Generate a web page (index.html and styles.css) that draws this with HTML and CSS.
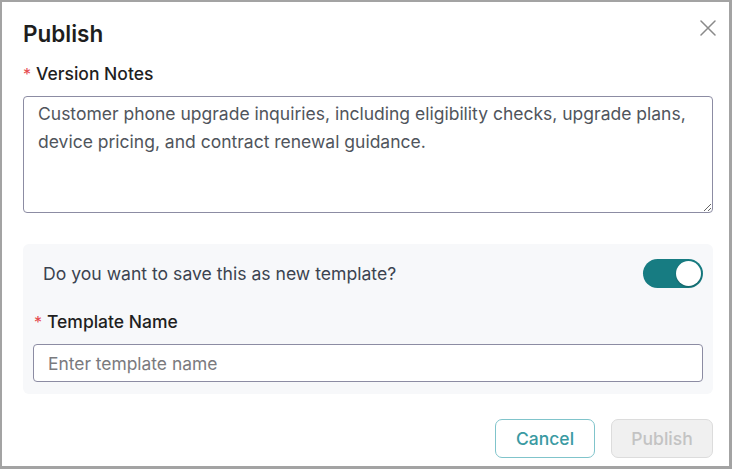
FILE: index.html
```html
<!DOCTYPE html>
<html lang="en">
<head>
<meta charset="utf-8">
<title>Publish</title>
<link rel="stylesheet" href="styles.css">
</head>
<body>
<div class="dialog">
  <div class="header">
    <h1 class="title">Publish</h1>
    <button class="close" aria-label="Close">
      <svg width="16" height="16" viewBox="0 0 16 16"><path d="M1 1L15 15M15 1L1 15" stroke="#8a8a8a" stroke-width="1.5" fill="none" stroke-linecap="round"/></svg>
    </button>
  </div>
  <label class="label"><span class="req">*</span>Version Notes</label>
  <textarea class="notes">Customer phone upgrade inquiries, including eligibility checks, upgrade plans, device pricing, and contract renewal guidance.</textarea>
  <div class="panel">
    <div class="question-row">
      <span class="question">Do you want to save this as new template?</span>
      <span class="toggle"><span class="knob"></span></span>
    </div>
    <label class="label label-tpl"><span class="req">*</span>Template Name</label>
    <input class="input" type="text" placeholder="Enter template name">
  </div>
  <div class="actions">
    <button class="btn btn-cancel">Cancel</button>
    <button class="btn btn-publish">Publish</button>
  </div>
</div>
</body>
</html>
```
FILE: styles.css
```css
* { box-sizing: border-box; }
html, body { margin: 0; padding: 0; background: #fff; }
body { font-family: Inter, "Noto Sans", sans-serif; }

.dialog {
  width: 732px;
  height: 469px;
  border-style: solid;
  border-color: #a3a3a3;
  border-width: 2px 3px 3px 2px;
  padding: 17px 16px 0 21px;
  background: #fff;
}

.header {
  display: flex;
  justify-content: space-between;
  align-items: flex-start;
  height: 30px;
}
.title {
  margin: 0;
  font-size: 22.5px;
  line-height: 30px;
  font-weight: 600;
  color: #1e1e1e;
}
.close {
  margin: 1px -3px 0 0;
  padding: 0;
  border: 0;
  background: none;
  width: 16px;
  height: 16px;
  display: flex;
}

.label {
  display: block;
  height: 24px;
  margin-top: 13px;
  font-size: 17.5px;
  line-height: 24px;
  font-weight: 450;
  color: #1f1f1f;
}
.req {
  color: #e5484d;
  margin-right: 5px;
  font-size: 16px;
  font-weight: 400;
}

.notes {
  display: block;
  width: 100%;
  height: 117px;
  margin-top: 10px;
  padding: 3px 14px;
  border: 1px solid #8c8ca3;
  border-radius: 4px;
  font-family: inherit;
  font-size: 17.5px;
  line-height: 28px;
  color: #50555c;
  resize: vertical;
  outline: none;
}

.panel {
  margin-top: 31px;
  background: #f7f8fa;
  border-radius: 6px;
  padding: 15px 10px 12px 10px;
}
.question-row {
  display: flex;
  justify-content: space-between;
  align-items: center;
  padding-left: 10px;
}
.question {
  font-size: 17.6px;
  line-height: 24px;
  color: #3b4350;
}
.toggle {
  width: 60px;
  height: 29px;
  border-radius: 15px;
  background: #177c82;
  display: flex;
  align-items: center;
  justify-content: flex-end;
  padding-right: 2px;
}
.knob {
  width: 25px;
  height: 25px;
  border-radius: 50%;
  background: #fff;
  box-shadow: 0 1px 2px rgba(0,0,0,0.25);
}
.label-tpl { margin-top: 22px; padding-left: 1px; }

.input {
  display: block;
  width: 100%;
  height: 38px;
  margin-top: 10px;
  padding: 0 14px;
  border: 1px solid #8c8ca3;
  border-radius: 4px;
  background: #fff;
  font-family: inherit;
  font-size: 17.4px;
  color: #333;
  outline: none;
}
.input::placeholder { color: #7a7a7e; }

.actions {
  display: flex;
  justify-content: flex-end;
  gap: 16px;
  margin-top: 25px;
}
.btn {
  height: 39px;
  border-radius: 7px;
  font-family: inherit;
  font-size: 17.5px;
  font-weight: 500;
  padding: 0;
}
.btn-cancel {
  width: 100px;
  background: #fff;
  border: 1px solid #80c4cb;
  color: #3a9aa2;
}
.btn-publish {
  width: 102px;
  background: #f0f0f0;
  border: 1px solid #dcdcdc;
  color: #c3c3c3;
}
```
